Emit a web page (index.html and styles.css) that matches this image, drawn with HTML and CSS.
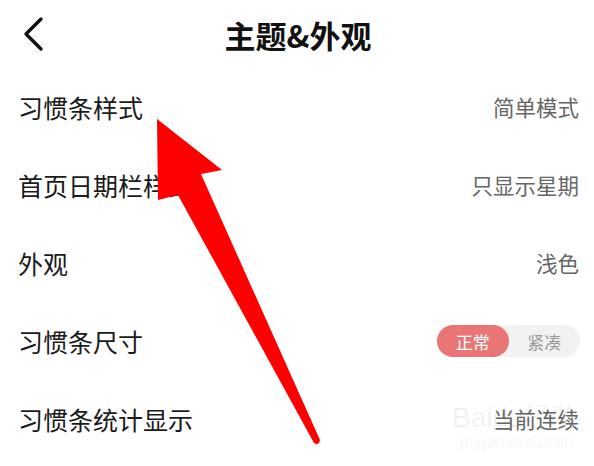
FILE: index.html
```html
<!DOCTYPE html>
<html lang="zh">
<head>
    <meta charset="UTF-8">
    <meta name="viewport" content="width=device-width, initial-scale=1.0">
    <title>主题&外观</title>
    <link rel="stylesheet" href="styles.css">
</head>
<body>
    <div class="page">
        <div class="header">
            <svg class="back" width="26" height="36" viewBox="0 0 26 36">
                <path d="M21 3 L6 18 L21 33" fill="none" stroke="#111" stroke-width="3.4" stroke-linecap="round" stroke-linejoin="round"/>
            </svg>
            <h1>主题&amp;外观</h1>
        </div>

        <div class="row">
            <span class="label">习惯条样式</span>
            <span class="value">简单模式</span>
        </div>
        <div class="row">
            <span class="label">首页日期栏样式</span>
            <span class="value">只显示星期</span>
        </div>
        <div class="row">
            <span class="label">外观</span>
            <span class="value">浅色</span>
        </div>
        <div class="row">
            <span class="label">习惯条尺寸</span>
            <div class="toggle">
                <span class="opt active">正常</span>
                <span class="opt">紧凑</span>
            </div>
        </div>
        <div class="row">
            <span class="label">习惯条统计显示</span>
            <span class="value">当前连续</span>
        </div>

        <div class="watermark">
            <span class="wm-logo">Baidu经验</span>
            <span class="wm-url">jingyan.baidu.com</span>
        </div>

        <svg class="arrow" width="594" height="466" viewBox="0 0 594 466">
            <path d="M157 119 L222 170 L201 174 L320 440 Q319 446 314 443 L178 195 L158 200 Z" fill="#fe0000"/>
        </svg>
    </div>
</body>
</html>
```

FILE: styles.css
```css
body {
    margin: 0;
    background-color: #fff;
    font-family: "Noto Sans CJK SC", "Noto Sans", sans-serif;
}
.page {
    position: relative;
    width: 594px;
    height: 466px;
    overflow: hidden;
}
.header {
    position: relative;
    height: 68px;
    display: flex;
    align-items: center;
    justify-content: center;
}
.back {
    position: absolute;
    left: 20px;
    top: 16px;
}
h1 {
    margin: 0;
    font-size: 31px;
    font-weight: bold;
    color: #111;
    line-height: 1;
    padding-left: 2px;
}
.row {
    height: 78px;
    display: flex;
    align-items: center;
    justify-content: space-between;
    padding: 0 15px 0 18px;
}
.label {
    font-size: 25px;
    color: #1a1a1a;
    line-height: 1;
}
.value {
    font-size: 21.5px;
    color: #666;
    line-height: 1;
}
.toggle {
    display: flex;
    background-color: #f2f2f2;
    border-radius: 16px;
    height: 32px;
    width: 143px;
    margin-right: -1px;
}
.opt {
    flex: 1;
    display: flex;
    align-items: center;
    justify-content: center;
    font-size: 17px;
    color: #999;
    border-radius: 16px;
}
.opt.active {
    background-color: #e97674;
    color: #fff;
}
.watermark {
    position: absolute;
    left: 452px;
    top: 404px;
    display: flex;
    flex-direction: column;
    align-items: center;
    color: rgba(0, 0, 0, 0.06);
    font-family: "Liberation Sans", sans-serif;
}
.wm-logo {
    font-size: 28px;
    line-height: 1;
}
.wm-url {
    font-size: 14px;
    line-height: 1.5;
}
.arrow {
    position: absolute;
    left: 0;
    top: 0;
}
```
